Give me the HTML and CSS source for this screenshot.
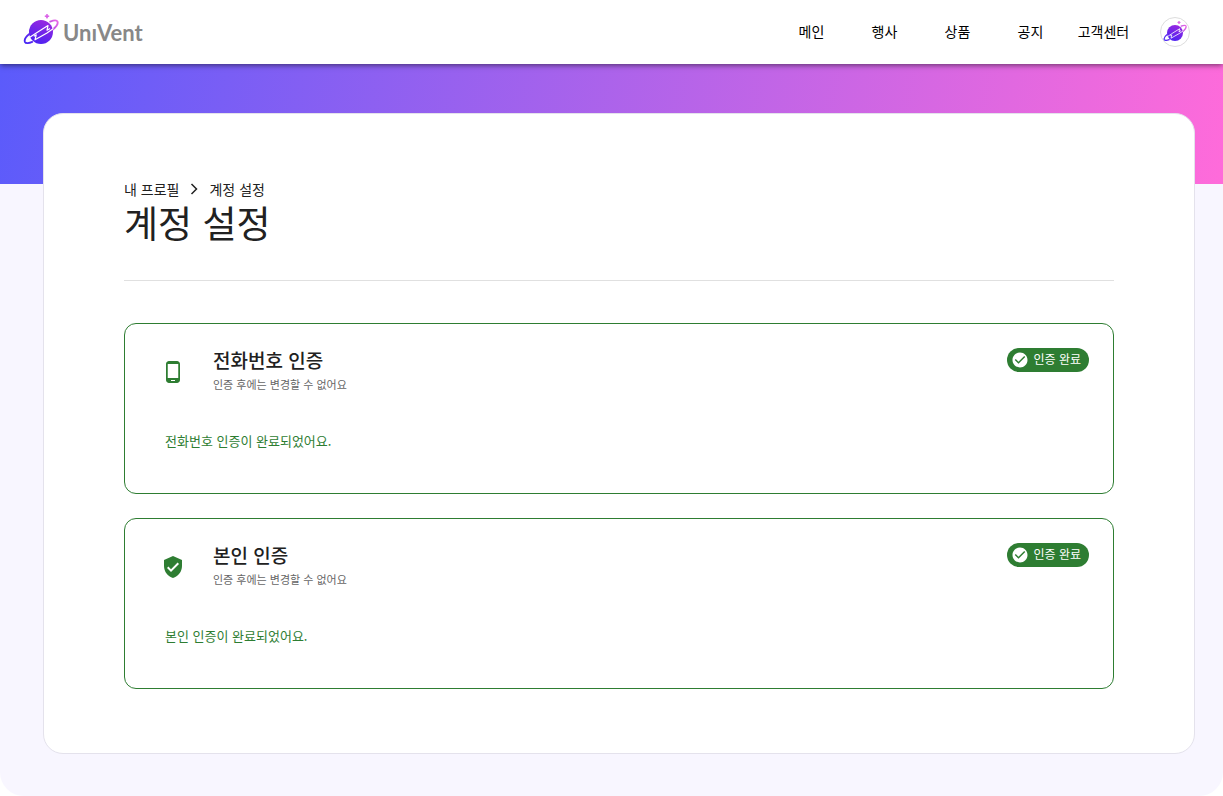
FILE: index.html
```html
<!DOCTYPE html>
<html lang="ko">
  <head>
    <meta charset="UTF-8" />
    <meta name="viewport" content="width=device-width, initial-scale=1.0" />
    <title>계정 설정 - UniVent</title>
    <link rel="stylesheet" href="styles.css">
  </head>
  <body>
    <svg class="defs" width="0" height="0" aria-hidden="true">
      <defs>
        <linearGradient id="planet-fill" x1="0.3" y1="1" x2="0.7" y2="0">
          <stop offset="0" stop-color="#4a22f2" />
          <stop offset="1" stop-color="#9a28e0" />
        </linearGradient>
        <linearGradient id="ring-fill" gradientUnits="userSpaceOnUse" x1="2" y1="30" x2="35" y2="8">
          <stop offset="0" stop-color="#4326f5" />
          <stop offset="0.5" stop-color="#8a2be2" />
          <stop offset="1" stop-color="#ea6ae6" />
        </linearGradient>
        <symbol id="planet" viewBox="0 0 36 32">
          <circle cx="18" cy="19" r="12" fill="url(#planet-fill)" />
          <path d="M6.600 20.800C3.200 23.400 1.200 26.800 1.900 28.800C2.700 30.800 6.200 30.200 9.200 28.900" fill="none" stroke="url(#ring-fill)" stroke-width="1.9" stroke-linecap="round" />
          <path d="M27.200 8.600C31 7.200 33.800 7 34.500 8.600C35.300 10.800 32.500 14.400 29.800 16.600" fill="none" stroke="url(#ring-fill)" stroke-width="1.9" stroke-linecap="round" />
          <path d="M6.400 24.600L12.500 20.400L25 12.600L24 17.200L27 15.400" fill="none" stroke="#fff" stroke-width="1.2" stroke-linejoin="round" />
          <path d="M30.400 15.600L24 20L12 26.800L13.200 21.800L10.800 23.200" fill="none" stroke="#fff" stroke-width="1.2" stroke-linejoin="round" />
          <path d="M24 1Q24.200 3 26.200 3.200Q24.200 3.400 24 5.400Q23.800 3.400 21.800 3.200Q23.800 3 24 1Z" fill="#d95fe6" stroke="#d95fe6" stroke-width="0.8" />
        </symbol>
      </defs>
    </svg>

    <header class="header">
      <a class="logo" href="#">
        <svg class="logo-icon" aria-hidden="true"><use href="#planet" /></svg>
        <span class="logo-text">UnıVent</span>
      </a>
      <nav class="nav">
        <a href="#">메인</a>
        <a href="#">행사</a>
        <a href="#">상품</a>
        <a href="#">공지</a>
        <a href="#">고객센터</a>
      </nav>
      <button class="avatar" type="button" aria-label="내 프로필">
        <svg aria-hidden="true"><use href="#planet" /></svg>
      </button>
    </header>

    <main class="page">
      <div class="panel">
        <nav class="breadcrumb">
          <a href="#">내 프로필</a>
          <svg viewBox="0 0 10 14" aria-hidden="true"><path d="M2.500 2l5 5-5 5" /></svg>
          <a href="#">계정 설정</a>
        </nav>
        <h1>계정 설정</h1>
        <hr />

        <section class="card">
          <div class="card-header">
            <svg class="card-icon" viewBox="0 0 24 24" aria-hidden="true">
              <path d="M16 1H8C6.340 1 5 2.340 5 4v16c0 1.660 1.340 3 3 3h8c1.660 0 3-1.340 3-3V4c0-1.660-1.340-3-3-3zm-2 20h-4v-1h4v1zm3.250-3H6.750V4h10.500v14z" />
            </svg>
            <div class="card-title">
              <h2>전화번호 인증</h2>
              <p>인증 후에는 변경할 수 없어요</p>
            </div>
            <span class="chip">
              <svg viewBox="0 0 24 24" aria-hidden="true">
                <path d="M12 2C6.480 2 2 6.480 2 12s4.480 10 10 10 10-4.480 10-10S17.520 2 12 2zm-2 15l-5-5 1.410-1.410L10 14.170l7.590-7.590L19 8l-9 9z" />
              </svg>
              <span>인증 완료</span>
            </span>
          </div>
          <p class="card-body">전화번호 인증이 완료되었어요.</p>
        </section>

        <section class="card">
          <div class="card-header">
            <svg class="card-icon" viewBox="0 0 24 24" aria-hidden="true">
              <path d="M12 1L3 5v6c0 5.550 3.840 10.740 9 12 5.160-1.260 9-6.450 9-12V5l-9-4zm-2 16l-4-4 1.410-1.410L10 14.170l6.590-6.590L18 9l-8 8z" />
            </svg>
            <div class="card-title">
              <h2>본인 인증</h2>
              <p>인증 후에는 변경할 수 없어요</p>
            </div>
            <span class="chip">
              <svg viewBox="0 0 24 24" aria-hidden="true">
                <path d="M12 2C6.480 2 2 6.480 2 12s4.480 10 10 10 10-4.480 10-10S17.520 2 12 2zm-2 15l-5-5 1.410-1.410L10 14.170l7.590-7.590L19 8l-9 9z" />
              </svg>
              <span>인증 완료</span>
            </span>
          </div>
          <p class="card-body">본인 인증이 완료되었어요.</p>
        </section>
      </div>
    </main>
  </body>
</html>
```
FILE: styles.css
```css
:root {
  --green: #2e7d32;
  --text: #212121;
  --muted: #666;
  --page-bg: #f8f6ff;
}

* {
  box-sizing: border-box;
}

body {
  margin: 0;
  min-height: 100vh;
  display: flex;
  flex-direction: column;
  background-color: white;
  color: var(--text);
  font-family: "Noto Sans CJK KR", sans-serif;
  font-size: 14px;
}

h1,
h2,
p {
  margin: 0;
}

a {
  color: inherit;
  text-decoration: none;
}

.defs {
  position: absolute;
}

.header {
  position: relative;
  z-index: 1;
  height: 64px;
  padding: 0 33px 0 23px;
  display: flex;
  align-items: center;
  background-color: white;
  box-shadow: 0 2px 4px -1px rgba(0, 0, 0, 0.3), 0 2px 6px rgba(0, 0, 0, 0.25);
}

.logo {
  display: flex;
  align-items: center;
  gap: 4px;
  margin-right: auto;
}

.logo-icon {
  width: 36px;
  height: 32px;
  margin-bottom: 6px;
}

.logo-text {
  color: #888;
  font-family: Lato, sans-serif;
  font-size: 22px;
  font-weight: 700;
}

.nav {
  display: flex;
  gap: 8px;
  margin-right: 24px;
  padding-bottom: 3px;
  color: black;
}

.nav a {
  width: 65px;
  text-align: center;
}

.avatar {
  width: 30px;
  height: 30px;
  padding: 0;
  display: flex;
  align-items: center;
  justify-content: center;
  background-color: white;
  border: 1px solid #ddd;
  border-radius: 50%;
}

.avatar svg {
  width: 24px;
  height: 22px;
  margin-bottom: 2px;
}

.page {
  flex: 1;
  padding: 49px 28px 42px 43px;
  background: linear-gradient(100deg, #5b5bfb, #ff6bda) no-repeat top / 100% 120px var(--page-bg);
  border-radius: 0 0 24px 24px;
}

.panel {
  padding: 64px 80px;
  background-color: white;
  border: 1px solid #e4e2ec;
  border-radius: 20px;
}

.breadcrumb {
  display: flex;
  align-items: center;
  gap: 10px;
  line-height: 22px;
}

.breadcrumb svg {
  width: 10px;
  height: 14px;
  fill: none;
  stroke: var(--text);
  stroke-width: 1.5;
}

h1 {
  font-size: 37px;
  font-weight: 400;
  line-height: 44px;
}

hr {
  margin: 36px 0 42px;
  border: 0;
  border-top: 1px solid #e0e0e0;
}

.card {
  padding: 24px;
  border: 1px solid var(--green);
  border-radius: 12px;
}

.card + .card {
  margin-top: 24px;
}

.card-header {
  display: flex;
  align-items: flex-start;
}

.card-icon {
  width: 24px;
  height: 24px;
  margin: 12px 28px 0 12px;
  fill: var(--green);
}

.card-title {
  flex: 1;
}

.card-title h2 {
  font-size: 19px;
  font-weight: 500;
  line-height: 24px;
}

.card-title p {
  color: var(--muted);
  font-size: 11px;
  line-height: 24px;
}

.chip {
  height: 24px;
  padding: 0 8px 0 4px;
  display: flex;
  align-items: center;
  gap: 4px;
  border-radius: 12px;
  background-color: var(--green);
  color: white;
  font-size: 12px;
  line-height: 20px;
}

.chip span {
  padding-bottom: 2px;
}

.chip svg {
  width: 18px;
  height: 18px;
  fill: currentColor;
}

.card-body {
  padding: 35px 16px 18px;
  color: var(--green);
  font-size: 13px;
  line-height: 20px;
}
```
